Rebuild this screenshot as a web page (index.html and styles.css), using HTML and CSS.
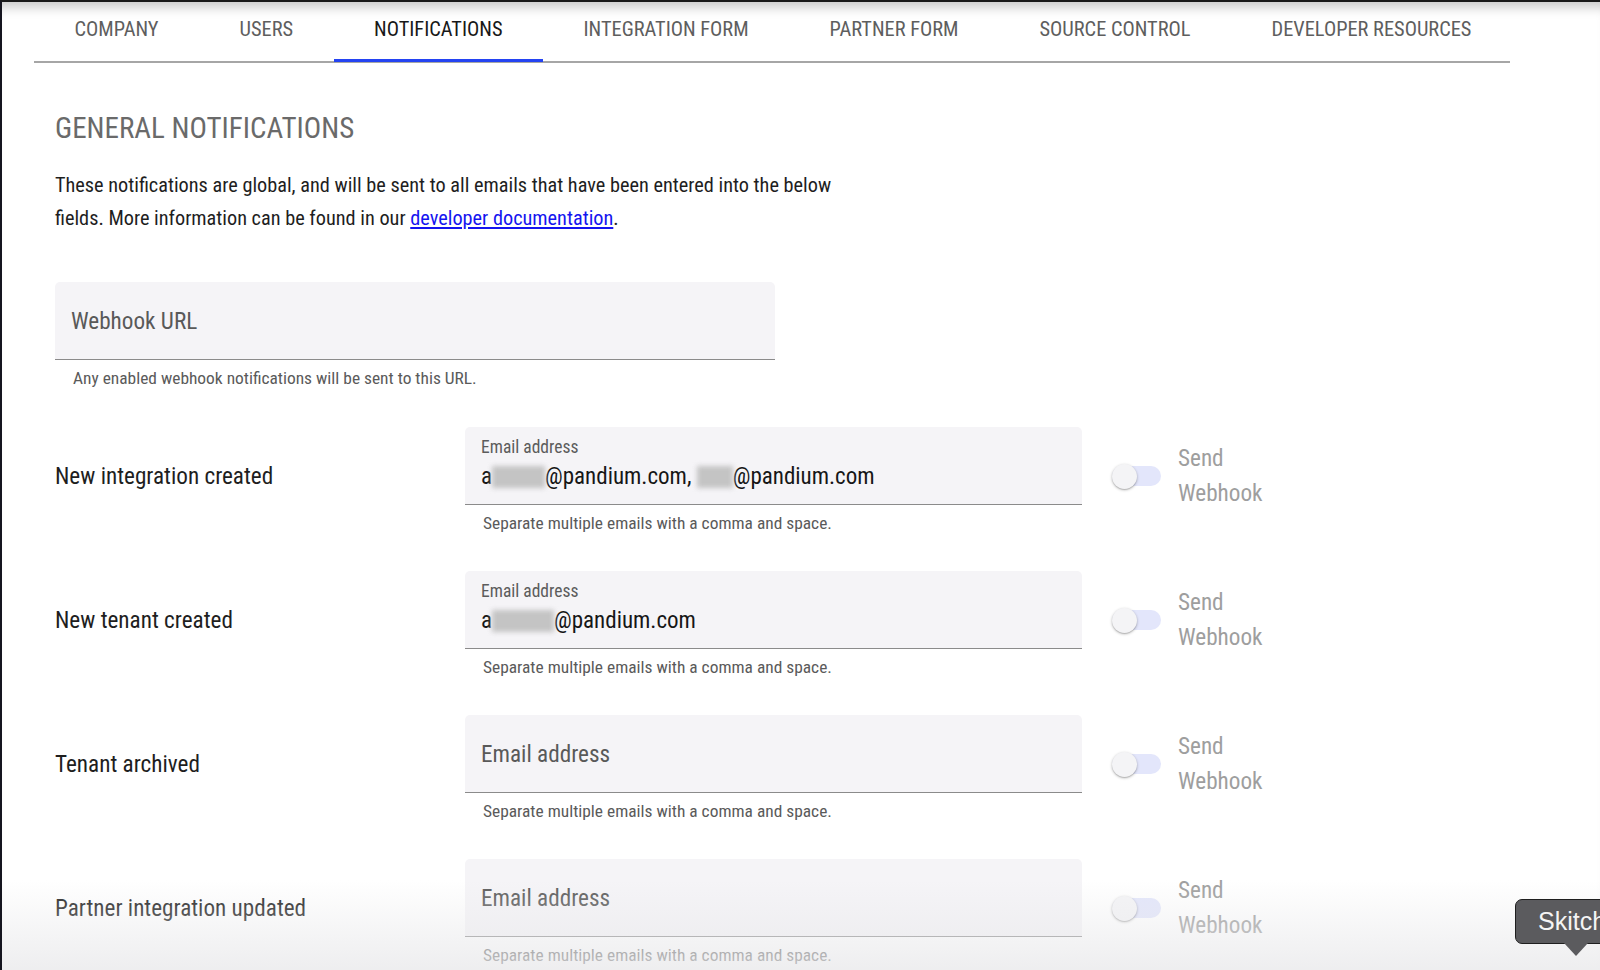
FILE: index.html
```html
<!DOCTYPE html>
<html lang="en">
<head>
<meta charset="utf-8">
<title>Notifications</title>
<link rel="stylesheet" href="styles.css">
</head>
<body>
<div class="screen">
  <nav class="tabs">
    <div class="tab">Company</div>
    <div class="tab">Users</div>
    <div class="tab active">Notifications</div>
    <div class="tab">Integration Form</div>
    <div class="tab">Partner Form</div>
    <div class="tab">Source Control</div>
    <div class="tab">Developer Resources</div>
  </nav>

  <main class="content">
    <h1 class="title">General Notifications</h1>
    <p class="intro">These notifications are global, and will be sent to all emails that have been entered into the below fields. More information can be found in our <a href="#" class="doc-link">developer documentation</a>.</p>

    <div class="webhook">
      <div class="field field-webhook"><span class="placeholder">Webhook URL</span></div>
      <div class="helper helper-webhook">Any enabled webhook notifications will be sent to this URL.</div>
    </div>

    <section class="rows">
      <div class="row">
        <div class="row-label">New integration created</div>
        <div class="field-block">
          <div class="field filled">
            <span class="small-label">Email address</span>
            <span class="value">a<span class="blur blur-a"></span>@pandium.com, <span class="blur blur-b"></span>@pandium.com</span>
          </div>
          <div class="helper">Separate multiple emails with a comma and space.</div>
        </div>
        <div class="switch-wrap"><div class="switch"><span class="track"></span><span class="thumb"></span></div></div>
        <div class="send">Send Webhook</div>
      </div>

      <div class="row">
        <div class="row-label">New tenant created</div>
        <div class="field-block">
          <div class="field filled">
            <span class="small-label">Email address</span>
            <span class="value">a<span class="blur blur-c"></span>@pandium.com</span>
          </div>
          <div class="helper">Separate multiple emails with a comma and space.</div>
        </div>
        <div class="switch-wrap"><div class="switch"><span class="track"></span><span class="thumb"></span></div></div>
        <div class="send">Send Webhook</div>
      </div>

      <div class="row">
        <div class="row-label">Tenant archived</div>
        <div class="field-block">
          <div class="field empty"><span class="placeholder">Email address</span></div>
          <div class="helper">Separate multiple emails with a comma and space.</div>
        </div>
        <div class="switch-wrap"><div class="switch"><span class="track"></span><span class="thumb"></span></div></div>
        <div class="send">Send Webhook</div>
      </div>

      <div class="row">
        <div class="row-label">Partner integration updated</div>
        <div class="field-block">
          <div class="field empty"><span class="placeholder">Email address</span></div>
          <div class="helper">Separate multiple emails with a comma and space.</div>
        </div>
        <div class="switch-wrap"><div class="switch"><span class="track"></span><span class="thumb"></span></div></div>
        <div class="send">Send Webhook</div>
      </div>
    </section>
  </main>

  <div class="bottom-fade"></div>
  <div class="skitch">Skitch</div>
</div>
</body>
</html>
```

FILE: styles.css
```css
* { box-sizing: border-box; }

html, body {
  margin: 0;
  padding: 0;
  width: 1600px;
  height: 970px;
  overflow: hidden;
  background: #ffffff;
}

body {
  font-family: Roboto, "Liberation Sans", sans-serif;
  font-stretch: 85%;
  color: #1b1b1b;
}

.screen {
  position: relative;
  width: 1600px;
  height: 970px;
  border-left: 2px solid #15151f;
  border-top: 2px solid #1a1a1a;
  box-shadow: inset 0 14px 12px -9px rgba(0, 0, 0, 0.22);
  overflow: hidden;
}

/* Tabs */
.tabs {
  display: flex;
  margin-left: 32px;
  width: 1476px;
  border-bottom: 2px solid #a6a6a6;
}

.tab {
  height: 59px;
  padding: 15px 40.5px 0;
  font-size: 20.4px;
  line-height: 24px;
  text-transform: uppercase;
  color: #5e5e5e;
  white-space: nowrap;
}

.tab.active {
  color: #181818;
  border-bottom: 3px solid #2443f2;
  margin-bottom: -2px;
  height: 60px;
}

/* Content */
.content {
  padding-left: 53px;
}

.title {
  margin: 47px 0 0;
  font-size: 29px;
  line-height: 36px;
  font-weight: 400;
  text-transform: uppercase;
  color: #6a6a6a;
}

.intro {
  margin: 23px 0 0;
  width: 800px;
  font-size: 20.3px;
  line-height: 32.6px;
  color: #1e1e1e;
}

.doc-link {
  color: #1414f0;
  text-decoration: underline;
}

/* Fields */
.field {
  background: #f5f4f7;
  border-radius: 5px 5px 0 0;
  border-bottom: 1px solid #8b8b8b;
}

.webhook {
  margin-top: 48px;
  width: 720px;
}

.field-webhook {
  height: 78px;
  display: flex;
  align-items: center;
  padding-left: 16px;
}

.placeholder {
  font-size: 23.2px;
  color: #595959;
}

.helper {
  font-size: 17.4px;
  line-height: 18px;
  color: #5a5a5a;
  padding-left: 18px;
  margin-top: 9px;
}

.helper-webhook {
  margin-top: 9px;
}

.rows {
  margin-top: 40px;
  display: flex;
  flex-direction: column;
  gap: 39px;
}

.row {
  display: flex;
  align-items: flex-start;
}

.row-label {
  width: 410px;
  height: 98px;
  display: flex;
  align-items: center;
  font-size: 23.2px;
  color: #1e1e1e;
}

.field-block {
  width: 617px;
}

.field.filled,
.field.empty {
  height: 78px;
  padding-left: 16px;
}

.field.filled {
  display: flex;
  flex-direction: column;
  padding-top: 10px;
}

.field.empty {
  display: flex;
  align-items: center;
}

.small-label {
  font-size: 17.5px;
  line-height: 20px;
  color: #5c5c5c;
}

.value {
  margin-top: 6px;
  font-size: 23px;
  line-height: 28px;
  color: #161616;
  display: flex;
  align-items: center;
  white-space: pre;
}

.blur {
  display: inline-block;
  height: 22px;
  background: #c4c4c4;
  filter: blur(2.5px);
}

.blur-a { width: 53px; }
.blur-b { width: 36px; }
.blur-c { width: 62px; }

/* Switch */
.switch-wrap {
  height: 98px;
  display: flex;
  align-items: center;
  margin-left: 30px;
}

.switch {
  display: grid;
  align-items: center;
  justify-items: start;
  width: 50px;
}

.track,
.thumb {
  grid-area: 1 / 1;
}

.track {
  width: 49px;
  height: 20px;
  border-radius: 10px;
  background: #e3e6fb;
}

.thumb {
  width: 25px;
  height: 25px;
  border-radius: 50%;
  background: #f4f4f6;
  box-shadow: 0 1px 3px rgba(0, 0, 0, 0.28), 0 1px 1px rgba(0, 0, 0, 0.12);
}

.send {
  margin-left: 16px;
  width: 100px;
  height: 98px;
  display: flex;
  align-items: center;
  font-size: 23.2px;
  line-height: 35px;
  color: #9e9e9e;
}

/* Overlays */
.bottom-fade {
  position: absolute;
  left: 0;
  right: 0;
  bottom: 0;
  height: 90px;
  background: linear-gradient(to bottom, rgba(236, 236, 238, 0) 0%, rgba(232, 232, 234, 0.75) 100%);
  pointer-events: none;
}

.skitch {
  position: absolute;
  left: 1513px;
  top: 897px;
  width: 120px;
  height: 45px;
  padding: 7px 0 0 22px;
  background: #5b5b5e;
  border: 1.5px solid #1f1f1f;
  border-radius: 7px;
  font-family: "Liberation Sans", Arial, sans-serif;
  font-stretch: normal;
  font-size: 25px;
  color: #f4f4f4;
}

.skitch::after {
  content: "";
  position: absolute;
  left: 48px;
  bottom: -13px;
  width: 0;
  height: 0;
  border-left: 12px solid transparent;
  border-right: 12px solid transparent;
  border-top: 13px solid #5b5b5e;
}
```
